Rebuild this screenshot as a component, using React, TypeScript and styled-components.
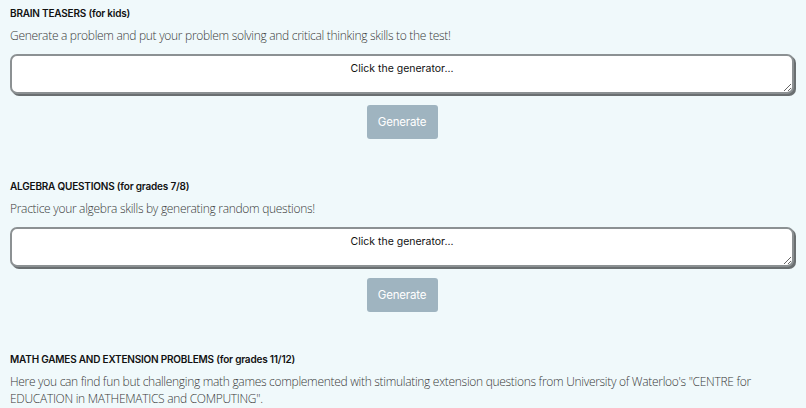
import React from 'react';
import styled, { createGlobalStyle } from 'styled-components';

const GlobalStyle = createGlobalStyle`
    html, body {
        margin: 0;
        padding: 0;
        background-color: #f0f9fb;
    }
`;

const Page = styled.div`
    padding: 6px 6px 0 10px;
    display: flex;
    flex-direction: column;
`;

const Section = styled.section`
    display: flex;
    flex-direction: column;
    margin-bottom: 40px;
`;

const Heading = styled.h3`
    margin: 0;
    font-family: "Inter", "Liberation Sans", sans-serif;
    font-weight: 600;
    font-size: 10px;
    letter-spacing: -0.2px;
    color: #111;
    line-height: 14px;
`;

const Description = styled.p`
    margin: 7px 0 0;
    font-family: "Open Sans", "Liberation Sans", sans-serif;
    font-weight: 300;
    font-size: 12px;
    letter-spacing: -0.3px;
    color: #3a3a3a;
    line-height: 17px;
`;

const Output = styled.textarea`
    box-sizing: border-box;
    width: calc(100% - 6px);
    height: 40px;
    margin-top: 10px;
    padding: 6px 8px;
    border: 2px solid #8c9193;
    border-radius: 7px;
    box-shadow: 2px 2px 0 #6a6f71;
    background: #fff;
    font-family: "Inter", "Liberation Sans", sans-serif;
    font-size: 10.5px;
    color: #111;
    text-align: center;
    resize: vertical;
    outline: none;
`;

const ButtonRow = styled.div`
    display: flex;
    justify-content: center;
    margin-top: 11px;
    padding-right: 6px;
`;

const GenerateButton = styled.button`
    width: 71px;
    height: 34px;
    border: none;
    border-radius: 3px;
    background-color: #9fb4c0;
    color: #fff;
    font-family: "Inter", "Liberation Sans", sans-serif;
    font-size: 11.5px;
    letter-spacing: -0.2px;
    cursor: pointer;
`;

interface GeneratorProps {
    title: string;
    text: string;
}

const Generator: React.FC<GeneratorProps> = ({ title, text }) => (
    <Section>
        <Heading>{title}</Heading>
        <Description>{text}</Description>
        <Output readOnly defaultValue="Click the generator..." />
        <ButtonRow>
            <GenerateButton>Generate</GenerateButton>
        </ButtonRow>
    </Section>
);

const App: React.FC = () => (
    <>
        <GlobalStyle />
        <Page>
            <Generator
                title="BRAIN TEASERS (for kids)"
                text="Generate a problem and put your problem solving and critical thinking skills to the test!"
            />
            <Generator
                title="ALGEBRA QUESTIONS (for grades 7/8)"
                text="Practice your algebra skills by generating random questions!"
            />
            <Section>
                <Heading>MATH GAMES AND EXTENSION PROBLEMS (for grades 11/12)</Heading>
                <Description>
                    Here you can find fun but challenging math games complemented with stimulating extension questions from University of Waterloo's "CENTRE for EDUCATION in MATHEMATICS and COMPUTING".
                </Description>
            </Section>
        </Page>
    </>
);

export default App;
